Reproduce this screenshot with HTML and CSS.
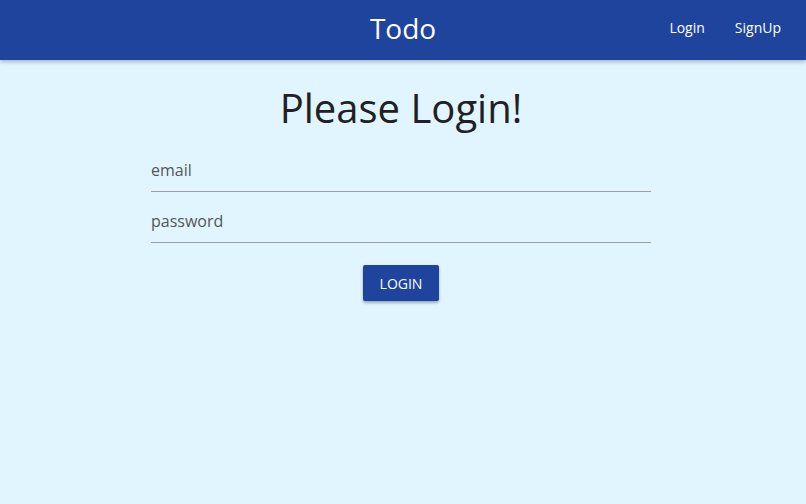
FILE: index.html
```html
<!DOCTYPE html>
<html>
<head>
<meta charset="utf-8">
<link rel="stylesheet" href="styles.css">
</head>
<body>
<header class="topbar">
  <div class="brand">Todo</div>
  <nav class="nav">
    <a class="nav-link" href="#">Login</a>
    <a class="nav-link" href="#">SignUp</a>
  </nav>
</header>
<main class="content">
  <h1 class="title">Please Login!</h1>
  <form class="form">
    <div class="field"><input class="input" type="text" placeholder="email"></div>
    <div class="field"><input class="input" type="password" placeholder="password"></div>
    <div class="actions"><button class="btn" type="button">LOGIN</button></div>
  </form>
</main>
</body>
</html>
```

FILE: styles.css
```css
* { box-sizing: border-box; }
html, body { margin: 0; height: 100%; }
body {
  background: #e0f5ff;
  font-family: "Open Sans", "Noto Sans", sans-serif;
  color: #212121;
}
.topbar {
  height: 60px;
  background: #1e449e;
  box-shadow: 0 2px 4px rgba(0,0,0,0.25);
  display: grid;
  grid-template-columns: 1fr auto 1fr;
  align-items: center;
}
.brand {
  grid-column: 2;
  color: #fff;
  font-size: 28px;
  line-height: 1;
  padding-bottom: 4px;
}
.nav {
  grid-column: 3;
  justify-self: end;
  display: flex;
  gap: 30px;
  margin-right: 25px;
  padding-bottom: 5px;
}
.nav-link {
  color: #fff;
  text-decoration: none;
  font-size: 14px;
}
.content {
  display: flex;
  flex-direction: column;
  align-items: center;
}
.title {
  margin: 23px 4px 0 0;
  font-size: 40px;
  font-weight: 400;
  line-height: 50px;
  color: #212121;
}
.form {
  width: 500px;
  margin-top: 8px;
  margin-right: 4px;
}
.field {
  height: 51px;
  display: flex;
  align-items: flex-end;
}
.input {
  width: 100%;
  border: none;
  border-bottom: 1px solid #9e9e9e;
  background: transparent;
  font-family: inherit;
  font-size: 16px;
  height: 44px;
  padding: 0;
  outline: none;
  color: #333;
}
.input::placeholder { color: #555; }
.actions {
  display: flex;
  justify-content: center;
  margin-top: 22px;
}
.btn {
  width: 76px;
  height: 36px;
  border: none;
  border-radius: 2px;
  background: #1e449e;
  color: #fff;
  font-family: inherit;
  font-size: 14px;
  box-shadow: 0 2px 3px rgba(0,0,0,0.3);
  padding: 0;
}
```
